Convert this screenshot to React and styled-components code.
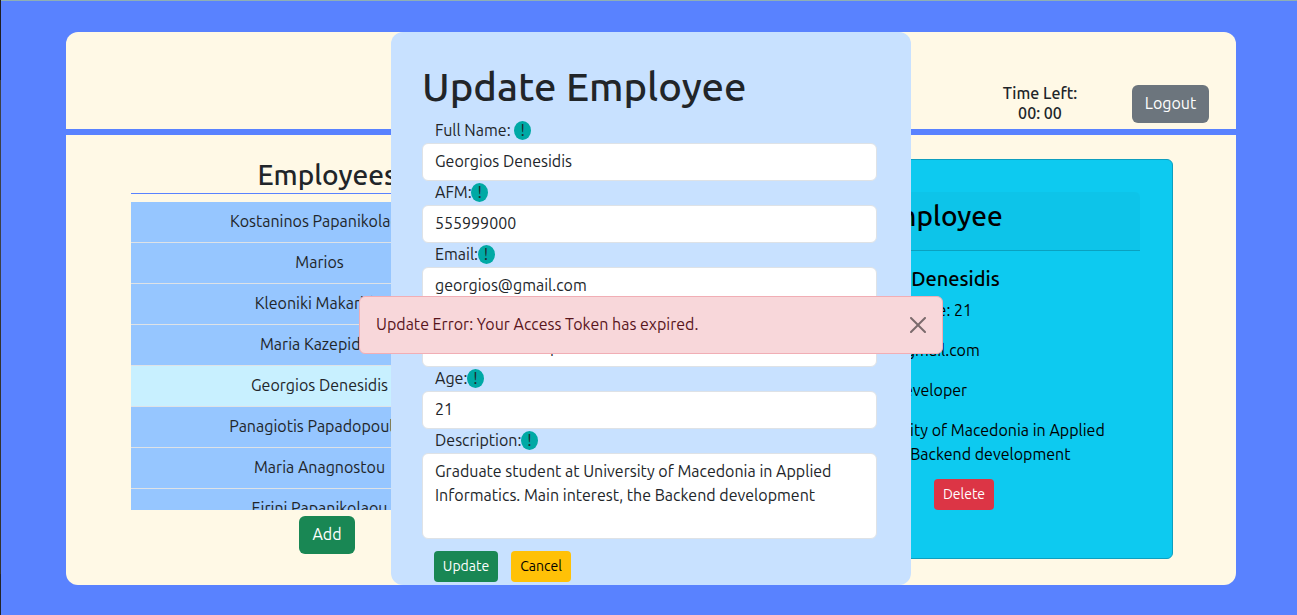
import React from 'react';
import styled, { createGlobalStyle, css } from 'styled-components';

const GlobalStyle = createGlobalStyle`
  *, *::before, *::after { box-sizing: border-box; }
  body {
    margin: 0;
    background: #5982ff;
    color: #212529;
    font: 400 16px/24px Ubuntu, "Noto Sans", sans-serif;
    overflow: hidden;
  }
  h1, h2, h3, p { margin: 0; font-weight: 400; }
  button, input, textarea { font: inherit; letter-spacing: inherit; }
`;

const Text = styled.span`
  white-space: nowrap;
`;

const Page = styled.div`
  height: 615px;
  padding: 32px 61px 0 66px;
  background:
    linear-gradient(#8fafb5, #8fafb5) 1px 0 / 100% 1px no-repeat,
    linear-gradient(#1e1e24 80px, #3c4048 80px 300px, #33332f 300px 574px, #22242a 574px) 0 0 / 1px 100% no-repeat,
    #5982ff;
`;

const Frame = styled.div`
  position: relative;
  height: 553px;
  display: flex;
  flex-direction: column;
  background: #fff9e6;
  border-radius: 12px;
`;

const Header = styled.header`
  height: 103px;
  border-bottom: 6px solid #5982ff;
  padding: 51px 27px 0 0;
  display: flex;
  justify-content: flex-end;
  align-items: flex-start;
  gap: 54px;
`;

const Timer = styled.div`
  text-align: center;
  line-height: 20px;
  font-weight: 500;
  width: 76px;
`;

const Button = styled.button`
  height: ${({ $small }) => ($small ? 31 : 38)}px;
  width: ${({ $w }) => $w}px;
  padding: 0 0 ${({ $small }) => ($small ? 1 : 2)}px;
  border: 0;
  border-radius: ${({ $small }) => ($small ? 4 : 6)}px;
  background: ${({ $bg }) => $bg};
  color: ${({ $fg = '#fff' }) => $fg};
  ${({ $small }) => $small && css`
    font-size: 14px;
    line-height: 21px;
  `}
`;

const LogoutButton = styled(Button)`
  margin-top: 2px;
`;

const Body = styled.main`
  flex: 1;
  display: flex;
  gap: 65px;
  padding: 24px 63px 0 65px;
`;

const ListColumn = styled.section`
  width: 392px;
  display: flex;
  flex-direction: column;
  align-items: center;
`;

const ListTitle = styled.h3`
  width: 100%;
  height: 35px;
  margin-bottom: 8px;
  border-bottom: 1px solid #5982ff;
  font-size: 28px;
  font-weight: 500;
  line-height: 31px;
  text-align: center;
`;

const List = styled.ul`
  width: 100%;
  height: 308px;
  margin: 0 0 6px;
  padding: 0 15px 0 0;
  list-style: none;
  overflow: hidden;
`;

const ListItem = styled.li`
  height: 41px;
  padding-top: 7px;
  text-align: center;
  background: ${({ $active }) => ($active ? '#c8f0ff' : '#96c6ff')};
  border-bottom: 1px solid #dee2e6;
`;

const Card = styled.section`
  flex: 1;
  height: 400px;
  padding: 32px;
  background: #0dcaf0;
  border: 1px solid #0d9fbf;
  border-radius: 6px;
  color: #000;
  text-align: center;
`;

const CardHeader = styled.div`
  height: 59px;
  padding-top: 8px;
  background: rgba(33, 37, 41, 0.03);
  border-bottom: 1px solid rgba(0, 0, 0, 0.176);
  border-radius: 5px 5px 0 0;
  font-size: 28px;
  font-weight: 500;
  line-height: 31px;
`;

const CardBody = styled.div`
  padding-top: 16px;
  h2 { font-size: 20px; font-weight: 500; margin-bottom: 7px; }
  p { margin-bottom: 16px; }
`;

const CardActions = styled.div`
  display: flex;
  justify-content: space-between;
  width: 227px;
  margin: -3px auto 0;
`;

const Modal = styled.section`
  position: absolute;
  left: 325px;
  top: 0;
  width: 520px;
  height: 553px;
  padding: 31px 34px 0 31px;
  border-radius: 12px;
  background: #c8e1ff;
`;

const ModalTitle = styled.h1`
  height: 56px;
  font-size: 40px;
  font-weight: 500;
  line-height: 48px;
`;

const Label = styled.label`
  display: flex;
  height: 24px;
  padding-left: 13px;
  gap: ${({ $gap = 0 }) => $gap}px;
  line-height: 22px;
`;

const Hint = styled.span`
  width: 17px;
  height: 19px;
  margin: 2px 0 0 -0.5px;
  border-radius: 50%;
  background: #00a9a5;
  text-align: center;
  line-height: 18px;
`;

const fieldStyle = css`
  display: block;
  width: 455px;
  padding: 5px 12px;
  border: 1px solid #dee2e6;
  border-radius: 6px;
  background: #fff;
  color: #212529;
`;

const Input = styled.input`
  ${fieldStyle}
  height: 38px;
  padding-bottom: 7px;
`;

const Area = styled.textarea`
  ${fieldStyle}
  height: 86px;
  resize: none;
  overflow: hidden;
`;

const FormActions = styled.div`
  display: flex;
  gap: 13px;
  padding: 12px 0 0 12px;
`;

const Alert = styled.div`
  position: absolute;
  left: 293px;
  top: 264px;
  width: 584px;
  height: 58px;
  display: flex;
  align-items: center;
  justify-content: space-between;
  padding: 0 16px 2px;
  border: 1px solid #f1aeb5;
  border-radius: 6px;
  background: #f8d7da;
  color: #58151c;
  svg { display: block; margin-top: 2px; }
`;

const employees = [
  'Kostaninos Papanikolaou',
  'Marios',
  'Kleoniki Makaridis',
  'Maria Kazepidou',
  'Georgios Denesidis',
  'Panagiotis Papadopoulos',
  'Maria Anagnostou',
  'Eirini Papanikolaou',
];

const fields = [
  { label: 'Full Name:', value: 'Georgios Denesidis', gap: 4 },
  { label: 'AFM:', value: '555999000' },
  { label: 'Email:', value: 'georgios@gmail.com' },
  { label: 'Position:', value: 'Backend Developer' },
  { label: 'Age:', value: '21' },
];

const description =
  'Graduate student at University of Macedonia in Applied\nInformatics. Main interest, the Backend development';

export default function App() {
  return (
    <Page>
      <GlobalStyle />
      <Frame>
        <Header>
          <Timer>
            <Text>Time Left:</Text>
            <br />
            <Text>00: 00</Text>
          </Timer>
          <LogoutButton $w={77} $bg="#6c757d"><Text>Logout</Text></LogoutButton>
        </Header>
        <Body>
          <ListColumn>
            <ListTitle><Text>Employees</Text></ListTitle>
            <List>
              {employees.map((name) => (
                <ListItem key={name} $active={name === 'Georgios Denesidis'}>
                  <Text>{name}</Text>
                </ListItem>
              ))}
            </List>
            <Button $w={56} $bg="#198754"><Text>Add</Text></Button>
          </ListColumn>
          <Card>
            <CardHeader><Text>Selected Employee</Text></CardHeader>
            <CardBody>
              <h2><Text>Name: Georgios Denesidis</Text></h2>
              <p><Text>AFM: 555999000, Age: 21</Text></p>
              <p><Text>Email: georgios@gmail.com</Text></p>
              <p><Text>Job: Backend Developer</Text></p>
              <p>
                <Text>About: Graduate student at University of Macedonia in Applied</Text>
                <br />
                <Text>Informatics. Main interest, the Backend development</Text>
              </p>
            </CardBody>
            <CardActions>
              <Button $small $w={64} $bg="#198754"><Text>Update</Text></Button>
              <Button $small $w={60} $bg="#dc3545"><Text>Delete</Text></Button>
            </CardActions>
          </Card>
        </Body>
        <Modal>
          <ModalTitle><Text>Update Employee</Text></ModalTitle>
          {fields.map(({ label, value, gap }) => (
            <React.Fragment key={label}>
              <Label $gap={gap}><Text>{label}</Text><Hint>!</Hint></Label>
              <Input defaultValue={value} />
            </React.Fragment>
          ))}
          <Label><Text>Description:</Text><Hint>!</Hint></Label>
          <Area defaultValue={description} />
          <FormActions>
            <Button $small $w={64} $bg="#198754"><Text>Update</Text></Button>
            <Button $small $w={60} $bg="#ffc107" $fg="#000"><Text>Cancel</Text></Button>
          </FormActions>
        </Modal>
        <Alert>
          <Text>Update Error: Your Access Token has expired.</Text>
          <svg width="16" height="16" viewBox="0 0 16 16" opacity="0.5">
            <path fill="#000" d="M.293.293a1 1 0 0 1 1.414 0L8 6.586 14.293.293a1 1 0 1 1 1.414 1.414L9.414 8l6.293 6.293a1 1 0 0 1-1.414 1.414L8 9.414l-6.293 6.293a1 1 0 0 1-1.414-1.414L6.586 8 .293 1.707a1 1 0 0 1 0-1.414z" />
          </svg>
        </Alert>
      </Frame>
    </Page>
  );
}
